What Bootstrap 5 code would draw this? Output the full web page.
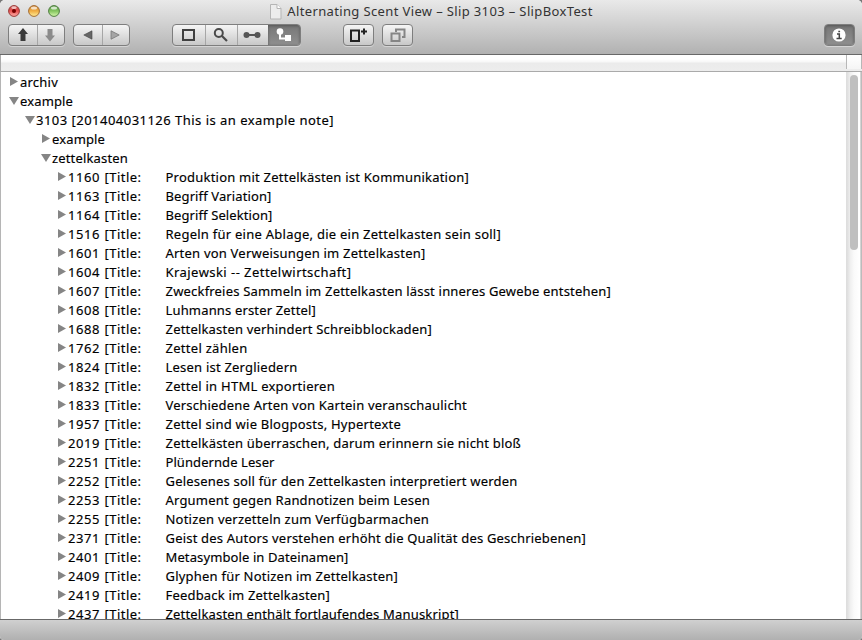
<!DOCTYPE html>
<html lang="de">
<head>
<meta charset="utf-8">
<title>SlipBoxTest</title>
<link rel="stylesheet" href="https://cdn.jsdelivr.net/npm/bootstrap@5.3.0/dist/css/bootstrap.min.css">
<style>
html,body{height:100%;overflow:hidden}
body{background:#777;color:#000;font-family:"Noto Sans","Open Sans",sans-serif;font-size:13px}
.win{height:640px;border-radius:5px 5px 4px 4px;background:#fff}
.chrome{height:55px;background:linear-gradient(#e9e9e9,#d3d3d3 40%,#b1b1b1);border-bottom:1px solid #686868}
.titleline{height:24px;padding-top:1px}
.lights{left:8px;top:5px;gap:8px}
.lights svg,.tb svg{display:block}
.caption{color:#333;line-height:21px;gap:5px}
.caption svg{margin-top:2px}
.tb{height:22px;padding:0 7.5px 0 8px}
.seg{height:22px;border:1px solid #7e7e7e;border-radius:4px;background:linear-gradient(#f5f5f5,#c8c8c8);box-shadow:0 1px 0 #d4d4d4;overflow:hidden}
.seg button{border:0;padding:0;background:none;display:flex;flex:1 1 0;align-items:center;justify-content:center;height:20px}
.seg button+button:not(.down){box-shadow:inset 1px 0 0 #a6a6a6}
.seg .down{background:linear-gradient(#777,#8f8f8f);box-shadow:inset 0 1px 3px #555}
.seg-pair{width:57px}
.seg-views{width:129px;margin:0 42px}
.seg-one{width:31px}
.colhead{height:17px;background:linear-gradient(#fff 0 1px,#fff 4px,#f7f7f7 7px,#ebebeb 8px,#ededed 100%);border-bottom:1px solid #aaa;border-left:1px solid #aaa}
.corner{width:16px;border:solid #b7b7b7;border-width:0 1px;background:linear-gradient(#fff,#f5f5f5);margin-bottom:2px}
.pane{height:547px;border-left:1px solid #b5b5b5;overflow:hidden}
.tree{padding-top:1px}
.tree>div{height:19px;line-height:19px;display:flex;white-space:pre;-webkit-text-stroke:.15px #000}
.tree i{width:8px;flex:none;margin:4px 2px 0 0;height:9px;background:#858585;clip-path:polygon(0 0,100% 50%,0 100%)}
.tree i.open{width:10px;height:8px;margin:5px 1px 0 -1px;clip-path:polygon(0 0,100% 0,50% 100%)}
.l0{padding-left:9px}.l1{padding-left:25px}.l2{padding-left:41px}.l3{padding-left:57px}
.num{width:36.5px}.key{width:61px}
.track{width:16px;background:linear-gradient(90deg,#dedede 0 1px,#f0f0f0,#fafafa 50%,#fff 85%,#bbb 94%);padding:3px 0 0 4px}
.thumb{width:8px;height:175px;border-radius:4px;background:#bfbfbf}
.foot{height:21px;border-top:1px solid #686868;background:linear-gradient(#d0d0d0,#b0b0b0)}
</style>
</head>
<body>
<div class="win d-flex flex-column overflow-hidden">
<header class="chrome flex-shrink-0">
<div class="titleline position-relative d-flex justify-content-center">
<div class="lights position-absolute d-flex">
<svg width="12" height="12"><defs><linearGradient id="r" x2="0" y2="1"><stop stop-color="#c74b48"/><stop offset=".5" stop-color="#e8514f"/><stop offset="1" stop-color="#ffb5af"/></linearGradient><linearGradient id="y" x2="0" y2="1"><stop stop-color="#ce8437"/><stop offset=".5" stop-color="#f1ad43"/><stop offset="1" stop-color="#fff09a"/></linearGradient><linearGradient id="g" x2="0" y2="1"><stop stop-color="#5d9c48"/><stop offset=".5" stop-color="#84c560"/><stop offset="1" stop-color="#d8faae"/></linearGradient></defs><circle cx="6" cy="6" r="5.4" fill="url(#r)" stroke="#983936"/><ellipse cx="6" cy="2.7" rx="2.7" ry="1.4" fill="#fff" opacity=".65"/><circle cx="6" cy="6" r="2" fill="#740000"/></svg>
<svg width="12" height="12"><circle cx="6" cy="6" r="5.4" fill="url(#y)" stroke="#a36b32"/><ellipse cx="6" cy="2.9" rx="3" ry="1.5" fill="#fff" opacity=".7"/></svg>
<svg width="12" height="12"><circle cx="6" cy="6" r="5.4" fill="url(#g)" stroke="#4f7d41"/><ellipse cx="6" cy="2.9" rx="3" ry="1.5" fill="#fff" opacity=".7"/></svg>
</div>
<div class="caption d-flex"><svg width="13" height="17"><path d="M1.5 1.5h6.500l4 4v10.500h-10.500z" fill="#ececec" stroke="#b5b5b5"/><path d="M8 1.500v4h4" fill="#fff" stroke="#b5b5b5"/></svg><span data-w="305.5">Alternating Scent View – Slip 3103 – SlipBoxTest</span></div>
</div>
<div class="tb d-flex">
<div class="seg seg-pair d-flex me-2">
<button><svg width="10" height="14"><path d="M5 0l5 6H7.500v7h-5V6H0z" fill="#3b3b3b"/></svg></button>
<button><svg width="10" height="14"><path d="M5 13.500l5-6H7.500V1h-5v6.500H0z" fill="#8b8b8b"/></svg></button>
</div>
<div class="seg seg-pair d-flex">
<button><svg width="10" height="10"><path d="M9 .8v8.400L.8 5z" fill="#666" stroke="#444" stroke-width=".6"/></svg></button>
<button><svg width="10" height="10"><path d="M1 .8v8.400L9.200 5z" fill="#a5a5a5" stroke="#777" stroke-width=".8"/></svg></button>
</div>
<div class="seg seg-views d-flex">
<button><svg width="13" height="12"><path d="M1 1h11v10H1z" fill="none" stroke="#404040" stroke-width="2"/></svg></button>
<button><svg width="16" height="14"><circle cx="5.800" cy="5" r="4" fill="none" stroke="#4a4a4a" stroke-width="2"/><path d="M9 8l5 5" stroke="#4a4a4a" stroke-width="2.200"/></svg></button>
<button><svg width="18" height="8"><path d="M4 4h10" stroke="#555" stroke-width="2"/><circle cx="3.500" cy="4" r="3" fill="#555"/><circle cx="14.500" cy="4" r="3" fill="#555"/></svg></button>
<button class="down"><svg width="16" height="14"><circle cx="4" cy="3.500" r="3.300" fill="#fff"/><path d="M4 4v6.500h6" fill="none" stroke="#fff" stroke-width="2"/><path d="M9 7h6v6H9z" fill="#fff"/></svg></button>
</div>
<div class="seg seg-one d-flex me-2"><button><svg width="18" height="15"><path d="M1 2.500h8v10.500H1z" fill="none" stroke="#222" stroke-width="2"/><path d="M11 3.500h6M14 .5v6" stroke="#222" stroke-width="2"/></svg></button></div>
<div class="seg seg-one d-flex"><button><svg width="16" height="15"><path d="M6 4V1.500h8.500V9H12M1.500 5.500h8V13h-8z" fill="none" stroke="#858585" stroke-width="2"/></svg></button></div>
<div class="seg seg-one d-flex ms-auto"><button class="down"><svg width="14" height="14"><circle cx="7" cy="7" r="6.600" fill="#fff"/><path d="M5 6h2.300v4.500M4.500 10.500h5.200M6.300 3.500h1.800" fill="none" stroke="#444" stroke-width="1.500"/></svg></button></div>
</div>
</header>
<div class="colhead d-flex justify-content-end flex-shrink-0"><div class="corner"></div></div>
<main class="pane d-flex">
<div class="tree flex-grow-1">
<div class="l0"><i></i><span data-w="38">archiv</span></div>
<div class="l0"><i class="open"></i><span data-w="53">example</span></div>
<div class="l1"><i class="open"></i><span data-w="298">3103 [201404031126 This is an example note]</span></div>
<div class="l2"><i></i><span data-w="53">example</span></div>
<div class="l2"><i class="open"></i><span data-w="76">zettelkasten</span></div>
<div class="l3"><i></i><span class="num"><span data-w="32">1160</span></span><span class="key"><span data-w="37">[Title:</span></span><span data-w="303.5">Produktion mit Zettelkästen ist Kommunikation]</span></div>
<div class="l3"><i></i><span class="num"><span data-w="32">1163</span></span><span class="key"><span data-w="37">[Title:</span></span><span data-w="106">Begriff Variation]</span></div>
<div class="l3"><i></i><span class="num"><span data-w="32">1164</span></span><span class="key"><span data-w="37">[Title:</span></span><span data-w="107">Begriff Selektion]</span></div>
<div class="l3"><i></i><span class="num"><span data-w="32">1516</span></span><span class="key"><span data-w="37">[Title:</span></span><span data-w="335.5">Regeln für eine Ablage, die ein Zettelkasten sein soll]</span></div>
<div class="l3"><i></i><span class="num"><span data-w="32">1601</span></span><span class="key"><span data-w="37">[Title:</span></span><span data-w="260">Arten von Verweisungen im Zettelkasten]</span></div>
<div class="l3"><i></i><span class="num"><span data-w="32">1604</span></span><span class="key"><span data-w="37">[Title:</span></span><span data-w="186">Krajewski -- Zettelwirtschaft]</span></div>
<div class="l3"><i></i><span class="num"><span data-w="32">1607</span></span><span class="key"><span data-w="37">[Title:</span></span><span data-w="445.5">Zweckfreies Sammeln im Zettelkasten lässt inneres Gewebe entstehen]</span></div>
<div class="l3"><i></i><span class="num"><span data-w="32">1608</span></span><span class="key"><span data-w="37">[Title:</span></span><span data-w="150.5">Luhmanns erster Zettel]</span></div>
<div class="l3"><i></i><span class="num"><span data-w="32">1688</span></span><span class="key"><span data-w="37">[Title:</span></span><span data-w="266.5">Zettelkasten verhindert Schreibblockaden]</span></div>
<div class="l3"><i></i><span class="num"><span data-w="32">1762</span></span><span class="key"><span data-w="37">[Title:</span></span><span data-w="82">Zettel zählen</span></div>
<div class="l3"><i></i><span class="num"><span data-w="32">1824</span></span><span class="key"><span data-w="37">[Title:</span></span><span data-w="132">Lesen ist Zergliedern</span></div>
<div class="l3"><i></i><span class="num"><span data-w="32">1832</span></span><span class="key"><span data-w="37">[Title:</span></span><span data-w="169.5">Zettel in HTML exportieren</span></div>
<div class="l3"><i></i><span class="num"><span data-w="32">1833</span></span><span class="key"><span data-w="37">[Title:</span></span><span data-w="301.5">Verschiedene Arten von Kartein veranschaulicht</span></div>
<div class="l3"><i></i><span class="num"><span data-w="32">1957</span></span><span class="key"><span data-w="37">[Title:</span></span><span data-w="235.5">Zettel sind wie Blogposts, Hypertexte</span></div>
<div class="l3"><i></i><span class="num"><span data-w="32">2019</span></span><span class="key"><span data-w="37">[Title:</span></span><span data-w="355.5">Zettelkästen überraschen, darum erinnern sie nicht bloß</span></div>
<div class="l3"><i></i><span class="num"><span data-w="32">2251</span></span><span class="key"><span data-w="37">[Title:</span></span><span data-w="109">Plündernde Leser</span></div>
<div class="l3"><i></i><span class="num"><span data-w="32">2252</span></span><span class="key"><span data-w="37">[Title:</span></span><span data-w="352">Gelesenes soll für den Zettelkasten interpretiert werden</span></div>
<div class="l3"><i></i><span class="num"><span data-w="32">2253</span></span><span class="key"><span data-w="37">[Title:</span></span><span data-w="264.5">Argument gegen Randnotizen beim Lesen</span></div>
<div class="l3"><i></i><span class="num"><span data-w="32">2255</span></span><span class="key"><span data-w="37">[Title:</span></span><span data-w="263.5">Notizen verzetteln zum Verfügbarmachen</span></div>
<div class="l3"><i></i><span class="num"><span data-w="32">2371</span></span><span class="key"><span data-w="37">[Title:</span></span><span data-w="420.5">Geist des Autors verstehen erhöht die Qualität des Geschriebenen]</span></div>
<div class="l3"><i></i><span class="num"><span data-w="32">2401</span></span><span class="key"><span data-w="37">[Title:</span></span><span data-w="183">Metasymbole in Dateinamen]</span></div>
<div class="l3"><i></i><span class="num"><span data-w="32">2409</span></span><span class="key"><span data-w="37">[Title:</span></span><span data-w="232.5">Glyphen für Notizen im Zettelkasten]</span></div>
<div class="l3"><i></i><span class="num"><span data-w="32">2419</span></span><span class="key"><span data-w="37">[Title:</span></span><span data-w="164.5">Feedback im Zettelkasten]</span></div>
<div class="l3"><i></i><span class="num"><span data-w="32">2437</span></span><span class="key"><span data-w="37">[Title:</span></span><span data-w="293.5">Zettelkasten enthält fortlaufendes Manuskript]</span></div>
</div>
<div class="track flex-shrink-0"><div class="thumb"></div></div>
</main>
<footer class="foot flex-shrink-0"></footer>
</div>
<script src="https://cdn.jsdelivr.net/npm/bootstrap@5.3.0/dist/js/bootstrap.bundle.min.js"></script>
<script>
// Track each label evenly so that it fills its intended width.
document.querySelectorAll('[data-w]').forEach(function (el) {
  var w = el.getBoundingClientRect().width;
  el.style.letterSpacing = ((+el.dataset.w - w) / el.textContent.length).toFixed(3) + 'px';
});
</script>
</body>
</html>
